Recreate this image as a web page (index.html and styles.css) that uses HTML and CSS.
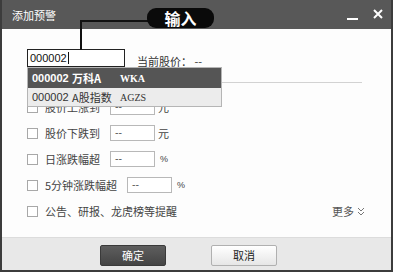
FILE: index.html
```html
<!DOCTYPE html>
<html lang="zh">
<head>
<meta charset="utf-8">
<link rel="stylesheet" href="styles.css">
</head>
<body>
<div class="window">
  <div class="titlebar">
    <span class="title">添加预警</span>
    <div class="win-btns">
      <span class="btn-min"></span>
      <svg class="btn-close" width="10" height="10" viewBox="0 0 10 10"><path d="M1 1L9 9M9 1L1 9" stroke="#fff" stroke-width="2"/></svg>
    </div>
  </div>
  <div class="callout">输入</div>
  <div class="connector"></div>
  <div class="content">
    <div class="search-row">
      <div class="code-input">000002<span class="caret"></span></div>
      <span class="price">当前股价：&nbsp;--</span>
    </div>
    <div class="separator"></div>
    <div class="options">
      <div class="opt"><span class="cb"></span><span class="lbl">股价上涨到</span><span class="val">--</span><span class="unit">元</span></div>
      <div class="opt"><span class="cb"></span><span class="lbl">股价下跌到</span><span class="val">--</span><span class="unit">元</span></div>
      <div class="opt"><span class="cb"></span><span class="lbl">日涨跌幅超</span><span class="val">--</span><span class="unit pct">%</span></div>
      <div class="opt"><span class="cb"></span><span class="lbl">5分钟涨跌幅超</span><span class="val">--</span><span class="unit pct">%</span></div>
      <div class="opt"><span class="cb"></span><span class="lbl">公告、研报、龙虎榜等提醒</span><span class="more">更多<svg width="8" height="9" viewBox="0 0 8 9"><path d="M1 1L4 4L7 1M1 5L4 8L7 5" fill="none" stroke="#777" stroke-width="1"/></svg></span></div>
    </div>
    <div class="dropdown">
      <div class="dd-row active"><span class="c1">000002</span><span class="c2">万科A</span><span class="c3">WKA</span></div>
      <div class="dd-row"><span class="c1">000002</span><span class="c2">A股指数</span><span class="c3">AGZS</span></div>
    </div>
  </div>
  <div class="footer">
    <button class="btn ok">确定</button>
    <button class="btn cancel">取消</button>
  </div>
</div>
</body>
</html>
```
FILE: styles.css
```css
* { box-sizing: border-box; }
html, body { margin: 0; padding: 0; background: #fff; }
body { width: 393px; height: 272px; overflow: hidden; font-family: "Noto Sans CJK SC", "Liberation Sans", sans-serif; }
.window {
  position: relative;
  width: 393px; height: 272px;
  border: 2px solid #3c3c3c;
  border-top: 0;
  display: flex; flex-direction: column;
  background: #fdfdfd;
}
.titlebar {
  height: 29px; flex: none;
  background: #585858;
  display: flex; align-items: center; justify-content: space-between;
  padding: 0 8px 0 10px;
  color: #fff;
}
.title { font-size: 11px; line-height: 1; margin-top: 2px; }
.win-btns { display: flex; align-items: center; gap: 15px; }
.btn-min { width: 11px; height: 2px; background: #fff; margin-top: 8px; }
.btn-close { margin-bottom: 2px; }
.callout {
  position: absolute; left: 145px; top: 8px;
  width: 67px; height: 20px;
  background: #0a0a0a; border-radius: 9px;
  color: #fff; font-size: 16px; font-weight: bold;
  display: flex; align-items: center; justify-content: center;
  line-height: 1;
  z-index: 3;
}
.connector {
  position: absolute; left: 78px; top: 20px;
  width: 68px; height: 30px;
  border-top: 2px solid #111; border-left: 2px solid #111;
  z-index: 2;
}
.content { flex: 1; position: relative; padding: 20px 0 0 25px; }
.search-row { display: flex; align-items: center; height: 18px; }
.code-input {
  width: 98px; height: 18px;
  border: 1.5px solid #222;
  background: #fff;
  font-family: "Liberation Sans", sans-serif; font-size: 11px;
  padding: 0 0 0 2px;
  display: flex; align-items: center;
  color: #111;
}
.caret { width: 1px; height: 12px; background: #111; margin-left: 1px; }
.price { margin-left: 12px; margin-top: 5px; font-size: 11px; color: #333; }
.separator { margin-top: 15px; width: 335px; height: 1px; background: #d2d2d2; }
.options { margin-top: 11px; display: flex; flex-direction: column; }
.opt { height: 26px; display: flex; align-items: center; font-size: 11px; color: #444; width: 338px; }
.cb { width: 11px; height: 11px; border: 1px solid #a8a8a8; background: #fff; flex: none; }
.lbl { margin-left: 7px; }
.val {
  margin-left: 10px; width: 45px; height: 16px;
  border: 1px solid #b8b8b8; background: #fff;
  font-size: 10px; line-height: 12px; padding-left: 4px; color: #333;
}
.unit { margin-left: 3px; }
.unit.pct { margin-left: 5px; font-size: 9px; font-family: "Liberation Sans", sans-serif; }
.more { margin-left: auto; display: flex; align-items: center; gap: 3px; color: #555; }
.dropdown {
  position: absolute; left: 25px; top: 38px;
  width: 195px;
  border: 1px solid #b5b5b5;
  z-index: 1;
}
.dd-row {
  height: 18px; display: flex; align-items: center;
  background: #ececec; color: #333;
  font-size: 11px; padding-left: 4px;
}
.dd-row.active { height: 20px; background: #555; color: #fff; font-weight: bold; }
.dd-row .c1 { width: 40px; font-family: "Liberation Sans", sans-serif; }
.dd-row .c2 { width: 48px; }
.dd-row .c3 { font-family: "Liberation Serif", serif; font-size: 10px; }
.footer {
  height: 33px; flex: none;
  background: #e8e8e8; border-top: 1px solid #dcdcdc;
  display: flex; align-items: flex-start;
  padding: 7px 0 0 98px;
}
.btn {
  width: 66px; height: 21px;
  font-family: "Noto Sans CJK SC", sans-serif; font-size: 11px;
  border-radius: 2px; padding: 0; line-height: 1;
}
.btn.ok { background: linear-gradient(#5e5e5e, #444); color: #fff; border: 1px solid #3a3a3a; }
.btn.cancel { margin-left: 45px; background: linear-gradient(#fff, #e6e6e6); color: #222; border: 1px solid #b0b0b0; }
```
